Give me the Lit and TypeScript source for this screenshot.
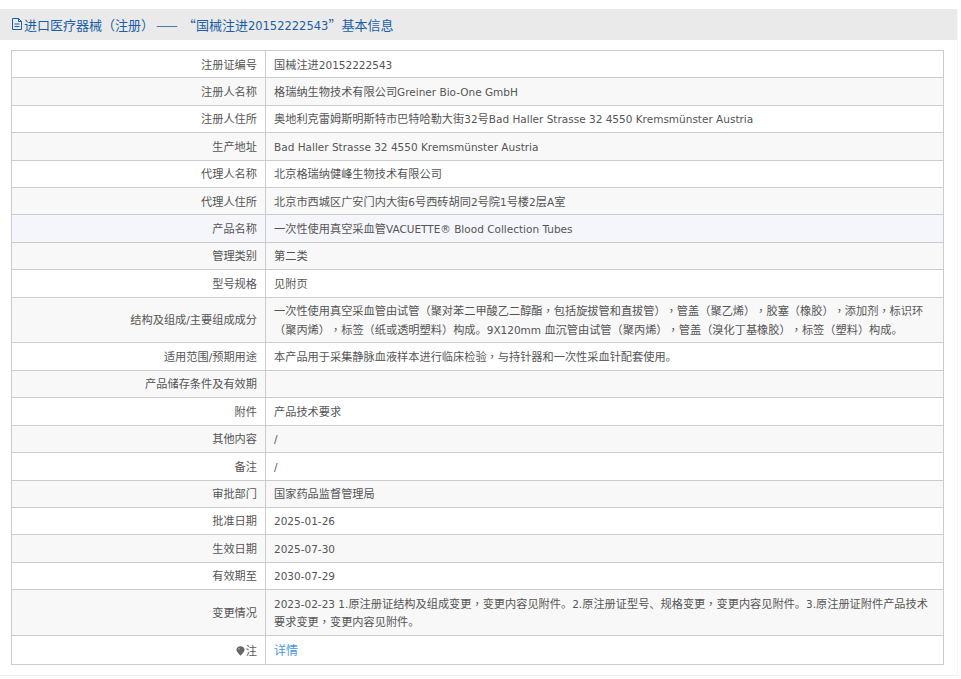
import { LitElement, html, css } from 'lit';
import { customElement } from 'lit/decorators.js';

const docIcon = html`<svg class="doc" width="10" height="12" viewBox="0 0 10 12" fill="none" stroke="currentColor" stroke-width="1"><path d="M.5 .5h6l3 3v8h-9z"/><path d="M6.500 .5v3h3M2.500 6h5M2.500 8.500h5"/></svg>`;
const pinIcon = html`<svg class="pin" width="9" height="10" viewBox="0 0 9 10"><path fill="#666" d="M4.500 .2c2.400 0 4.100 1.500 4.100 3.600 0 2.200-2.500 3.800-4.100 6-1.600-2.200-4.100-3.800-4.100-6 0-2.100 1.700-3.600 4.100-3.600z"/><circle cx="3" cy="2.800" r="1" fill="#999"/></svg>`;

const rows: [string, string][] = [
  ['注册证编号', '国械注进20152222543'],
  ['注册人名称', '格瑞纳生物技术有限公司Greiner Bio-One GmbH'],
  ['注册人住所', '奥地利克雷姆斯明斯特市巴特哈勒大街32号Bad Haller Strasse 32 4550 Kremsmünster Austria'],
  ['生产地址', 'Bad Haller Strasse 32 4550 Kremsmünster Austria'],
  ['代理人名称', '北京格瑞纳健峰生物技术有限公司'],
  ['代理人住所', '北京市西城区广安门内大街6号西砖胡同2号院1号楼2层A室'],
  ['产品名称', '一次性使用真空采血管VACUETTE® Blood Collection Tubes'],
  ['管理类别', '第二类'],
  ['型号规格', '见附页'],
  ['结构及组成/主要组成成分', '一次性使用真空采血管由试管（聚对苯二甲酸乙二醇酯，包括旋拔管和直拔管），管盖（聚乙烯），胶塞（橡胶），添加剂，标识环（聚丙烯），标签（纸或透明塑料）构成。9X120mm 血沉管由试管（聚丙烯），管盖（溴化丁基橡胶），标签（塑料）构成。'],
  ['适用范围/预期用途', '本产品用于采集静脉血液样本进行临床检验，与持针器和一次性采血针配套使用。'],
  ['产品储存条件及有效期', ''],
  ['附件', '产品技术要求'],
  ['其他内容', '/'],
  ['备注', '/'],
  ['审批部门', '国家药品监督管理局'],
  ['批准日期', '2025-01-26'],
  ['生效日期', '2025-07-30'],
  ['有效期至', '2030-07-29'],
  ['变更情况', '2023-02-23 1.原注册证结构及组成变更，变更内容见附件。2.原注册证型号、规格变更，变更内容见附件。3.原注册证附件产品技术要求变更，变更内容见附件。'],
];

// latin runs and the centred full-width punctuation need their own fonts
const fmt = (text: string) =>
  text.split(/([，（）“”]|[\x20-\x7e®ü]+)/).map((part, i) => {
    if (i % 2 === 0) return part;
    return html`<span class=${/^[，（）“”]/.test(part) ? 'p' : 'l'}>${part}</span>`;
  });

@customElement('app-root')
export class AppRoot extends LitElement {
  static styles = css`
    :host {
      display: block;
      height: 679px;
      overflow: hidden;
      background: #fff;
      font-family: "Noto Sans CJK SC", sans-serif;
      font-size: 11.200px;
      color: #555;
      text-spacing-trim: space-all;
    }
    .panel {
      margin: 9px 3px 0 0;
      height: 667px;
      box-sizing: border-box;
      border-bottom: 1px solid #eee;
      border-right: 1px solid #f5f5f5;
    }
    .title {
      display: flex;
      align-items: center;
      height: 30px;
      padding: 0 0 1px 12px;
      background: #eaeaea;
      color: #1c5ea5;
      font-size: 13px;
    }
    .title > span {
      white-space: pre;
    }
    .title .l {
      font-size: 11.500px;
    }
    .doc {
      margin-right: 2px;
    }
    .p {
      font-family: "Noto Sans CJK TC", sans-serif;
      line-height: 0;
    }
    .l {
      font-family: "DejaVu Sans", sans-serif;
      font-size: 10.500px;
      line-height: 0;
    }
    .dash {
      margin: 0 5px 0 2px;
    }
    table {
      margin: 10px 0 0 11px;
      width: 933px;
      border-collapse: collapse;
      table-layout: fixed;
    }
    td {
      border: 1px solid #ccc;
      padding: 3.500px 8px 4.500px;
      line-height: 18.400px;
      word-break: break-all;
    }
    tr:last-child td {
      padding: 5px 8px;
    }
    .label {
      width: 237px;
      text-align: right;
    }
    tr:nth-child(even) td {
      background: #f8f8f8;
    }
    tr.hover td {
      background: #f5f6fb;
    }
    .pin {
      vertical-align: -1px;
      margin-right: 1px;
    }
    a {
      color: #4a96de;
      text-decoration: none;
      font-size: 12px;
      line-height: 0;
    }
  `;

  render() {
    return html`<div class="panel">
      <div class="title">${docIcon}<span>${fmt('进口医疗器械（注册）')}<span class="dash">——</span>${fmt('“国械注进20152222543”')}基本信息</span></div>
      <table>
        ${rows.map(([k, v], i) => html`<tr class=${i === 6 ? 'hover' : ''}><td class="label">${fmt(k)}</td><td>${fmt(v)}</td></tr>`)}
        <tr><td class="label">${pinIcon}注</td><td><a href="#">详情</a></td></tr>
      </table>
    </div>`;
  }
}
